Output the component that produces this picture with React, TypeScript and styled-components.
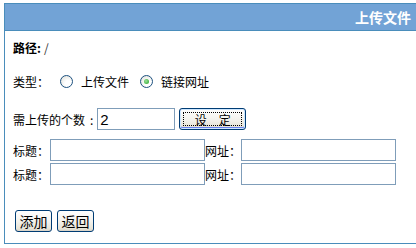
import React from "react";
import styled, { createGlobalStyle } from "styled-components";

const Global = createGlobalStyle`
  html, body { margin: 0; padding: 0; background: #ffffff; overflow: hidden; }
  body { font-family: "Liberation Sans", "Noto Sans CJK SC", sans-serif; font-size: 12px; color: #000; }
`;

const Panel = styled.div`
  margin: 3px 0 0 4px;
  width: 430px;
  height: 239px;
  border: 1px solid #4a8dbb;
  border-right: none;
  display: flex;
  flex-direction: column;
`;

const Header = styled.div`
  height: 26px;
  background: #72a3d6;
  border-bottom: 1px solid #4a8dbb;
  display: flex;
  align-items: center;
  justify-content: flex-end;
  padding-right: 24px;
  color: #ffffff;
  font-weight: bold;
  font-size: 14px;
  font-family: "Noto Sans CJK SC", sans-serif;
`;

const Body = styled.div`
  padding: 6px 8px 0 8px;
  display: flex;
  flex-direction: column;
`;

const Row = styled.div<{ $h: number; $mt: number }>`
  height: ${(p) => p.$h}px;
  margin-top: ${(p) => p.$mt}px;
  display: flex;
  align-items: center;
  font-family: "Noto Sans CJK SC", sans-serif;
  font-size: 12px;
  white-space: nowrap;
`;

const Bold = styled.span`
  font-weight: bold;
`;

const Slash = styled.span`
  margin-left: 3px;
  color: #333;
`;

const Colon = styled.span`
  margin: 0 4px 0 5px;
`;

const RadioCircle = styled.span<{ $checked?: boolean }>`
  width: 11px;
  height: 11px;
  border-radius: 50%;
  border: 1px solid #1c5180;
  background: radial-gradient(circle at 65% 70%, #ffffff 30%, #dcdcd4 100%);
  display: inline-flex;
  align-items: center;
  justify-content: center;
  margin: 0 8px 0 11px;
  &::after {
    content: "";
    width: 5px;
    height: 5px;
    border-radius: 50%;
    background: ${(p) => (p.$checked ? "radial-gradient(circle at 40% 40%, #9be19b, #21a121)" : "transparent")};
  }
`;

const Input = styled.input<{ $w: number }>`
  width: ${(p) => p.$w}px;
  height: 22px;
  box-sizing: border-box;
  border: 1px solid #7f9db9;
  padding: 0 2px;
  margin: 0;
  font-family: "Liberation Sans", sans-serif;
  font-size: 15px;
  outline: none;
  background: #fff;
`;

const XPButton = styled.button<{ $w: number; $focus?: boolean }>`
  width: ${(p) => p.$w}px;
  height: 22px;
  box-sizing: border-box;
  border: 1px solid #003c74;
  border-radius: 3px;
  background: linear-gradient(#ffffff 0%, #f4f3ee 50%, #e6e3d6 90%, #d6d0c5 100%);
  font-family: "Noto Sans CJK SC", sans-serif;
  font-size: ${(p) => (p.$focus ? 12 : 14)}px;
  color: #000;
  padding: 0 0 0 ${(p) => (p.$focus ? 12 : 0)}px;
  margin: 0;
  position: relative;
  display: inline-flex;
  align-items: center;
  justify-content: center;
  letter-spacing: ${(p) => (p.$focus ? "12px" : "0")};
  ${(p) =>
    p.$focus
      ? `
    box-shadow: inset 0 0 0 1px #cee7ff, inset 0 -1px 0 1px #6982ee;
    &::before {
      content: "";
      position: absolute;
      inset: 3px;
      border: 1px dotted #000;
    }
  `
      : ""}
`;

const Gap = styled.span<{ $w: number }>`
  display: inline-block;
  width: ${(p) => p.$w}px;
`;

export default function App() {
  return (
    <>
      <Global />
      <Panel>
        <Header>上传文件</Header>
        <Body>
          <Row $h={20} $mt={0}>
            <Bold>路径:</Bold>
            <Slash>/</Slash>
          </Row>
          <Row $h={20} $mt={14}>
            <span>类型：</span>
            <RadioCircle />
            <span>上传文件</span>
            <RadioCircle $checked />
            <span>链接网址</span>
          </Row>
          <Row $h={26} $mt={15}>
            <span>需上传的个数</span>
            <Colon>:</Colon>
            <Input $w={78} defaultValue="2" />
            <Gap $w={4} />
            <XPButton $w={67} $focus>
              设定
            </XPButton>
          </Row>
          <Row $h={22} $mt={7}>
            <span>标题：</span>
            <Gap $w={1} />
            <Input $w={155} />
            <span>网址：</span>
            <Input $w={155} />
          </Row>
          <Row $h={22} $mt={2}>
            <span>标题：</span>
            <Gap $w={1} />
            <Input $w={155} />
            <span>网址：</span>
            <Input $w={155} />
          </Row>
          <Row $h={22} $mt={25}>
            <Gap $w={2} />
            <XPButton $w={37}>添加</XPButton>
            <Gap $w={5} />
            <XPButton $w={37}>返回</XPButton>
          </Row>
        </Body>
      </Panel>
    </>
  );
}
